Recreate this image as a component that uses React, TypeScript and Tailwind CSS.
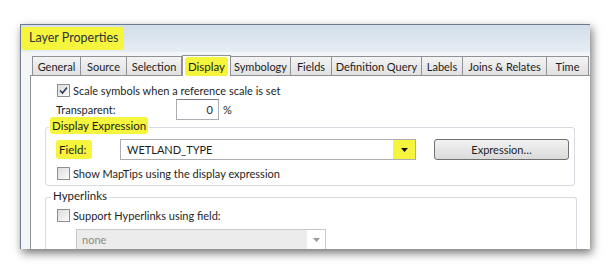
import React from 'react';

const tabs = ['General', 'Source', 'Selection', 'Display', 'Symbology', 'Fields', 'Definition Query', 'Labels', 'Joins & Relates', 'Time'];
const tabWidths: Record<string, string> = {
    General: 'w-[49px]',
    Source: 'w-[46px]',
    Selection: 'w-[55px]',
    Display: 'w-[49px]',
    Symbology: 'w-[60px]',
    Fields: 'w-[41px]',
    'Definition Query': 'w-[90px]',
    Labels: 'w-[41px]',
    'Joins & Relates': 'w-[84px]',
    Time: 'w-[42px]',
};

const Checkbox: React.FC<{ checked?: boolean }> = ({ checked }) => (
    <span className="w-[13px] h-[13px] border border-[#8f8f8f] bg-gradient-to-br from-[#dcdcdc] to-[#fbfbfb] flex items-center justify-center shrink-0">
        {checked && (
            <svg width="9" height="9" viewBox="0 0 9 9">
                <path d="M1 4.5 L3.5 7 L8 1.5" stroke="#2a3a5a" strokeWidth="1.6" fill="none" />
            </svg>
        )}
    </span>
);

const Hi: React.FC<{ children: React.ReactNode; className?: string }> = ({ children, className }) => (
    <span className={`bg-[#f4f53c] rounded-[3px] ${className ?? ''}`}>{children}</span>
);

const App: React.FC = () => {
    return (
        <div className="w-[611px] h-[268px] bg-white overflow-hidden pt-[24px] pl-[20px] text-[11px] text-[#1e1e1e] font-['Lato',sans-serif] leading-none whitespace-nowrap">
            <div className="w-[570px] h-[225px] overflow-hidden border-l border-t border-[#6c7a8c] bg-[#f3f5f8] shadow-[2px_4px_9px_rgba(0,0,0,0.55)] flex flex-col">
                {/* title bar */}
                <div className="shrink-0 h-[27px] bg-gradient-to-b from-[#d3deea] to-[#e6edf4] flex items-center">
                    <Hi className="pl-[8px] pr-[6px] py-[5px] text-[12.5px] text-[#2f343b]">Layer Properties</Hi>
                </div>

                <div className="flex-1 pl-[9px] pt-[2px] flex flex-col">
                    {/* tabs */}
                    <div className="shrink-0 flex items-end h-[21px] pl-[2px]">
                        {tabs.map(t =>
                            t === 'Display' ? (
                                <div key={t} className={`${tabWidths[t]} h-[21px] -mb-[1px] border border-b-0 border-[#8e9297] bg-white flex items-center justify-center relative z-10 px-[2px] pt-[1px]`}>
                                    <Hi className="w-full h-full flex items-center justify-center text-[11.5px]">{t}</Hi>
                                </div>
                            ) : (
                                <div key={t} className={`${tabWidths[t]} h-[19px] border border-b-0 border-l-0 first:border-l border-[#8e9297] bg-gradient-to-b from-[#f4f4f4] to-[#e1e1e1] flex items-center justify-center`}>
                                    {t}
                                </div>
                            )
                        )}
                    </div>

                    {/* panel */}
                    <div className="flex-1 border-l border-t border-[#8e9297] bg-white pl-[26px] pt-[8px]">
                        <div className="flex items-center gap-[2px] h-[13px]">
                            <Checkbox checked />
                            <span className="ml-[1px]">Scale symbols when a reference scale is set</span>
                        </div>

                        <div className="flex items-center h-[21px] mt-[2px] -ml-[1px]">
                            <span className="w-[120px]">Transparent:</span>
                            <span className="w-[43px] h-[21px] border border-[#abadb3] border-t-[#7b7f87] flex items-center justify-end pr-[5px]">0</span>
                            <span className="ml-[4px]">%</span>
                        </div>

                        {/* Display Expression group */}
                        <div className="relative mt-[7px] -ml-[12px] w-[530px] h-[59px] border border-[#d5dbe1] rounded-[3px] pt-[11px] pl-[10px]">
                            <div className="absolute -top-[8px] left-[3px] bg-white px-[1px]">
                                <Hi className="px-[2px] py-[2px] text-[11.5px]">Display Expression</Hi>
                            </div>
                            <div className="flex items-center h-[21px]">
                                <span className="w-[64px]">
                                    <Hi className="pl-[3px] pr-[6px] py-[3px] text-[11.5px]">Field:</Hi>
                                </span>
                                <div className="w-[296px] h-[21px] border border-[#abadb3] flex items-center pl-[6px]">
                                    <span className="flex-1">WETLAND_TYPE</span>
                                    <span className="w-[22px] h-[19px] bg-[#f4f53c] flex items-center justify-center">
                                        <svg width="7" height="4" viewBox="0 0 7 4"><path d="M0 0 H7 L3.5 4 Z" fill="#111" /></svg>
                                    </span>
                                </div>
                                <button className="ml-[18px] w-[135px] h-[21px] rounded-[3px] border border-[#707070] bg-gradient-to-b from-[#f3f3f3] to-[#dadada] text-[11px] text-[#1e1e1e]">
                                    Expression…
                                </button>
                            </div>
                            <div className="flex items-center gap-[3px] mt-[7px] ml-[1px]">
                                <Checkbox />
                                <span>Show MapTips using the display expression</span>
                            </div>
                        </div>

                        {/* Hyperlinks group */}
                        <div className="relative mt-[11px] -ml-[12px] w-[532px] h-[60px] border border-b-0 border-[#d5dbe1] rounded-t-[3px] pt-[11px] pl-[11px]">
                            <div className="absolute -top-[8px] left-[5px] bg-white px-[2px] text-[11.5px]">Hyperlinks</div>
                            <div className="flex items-center gap-[3px]">
                                <Checkbox />
                                <span>Support Hyperlinks using field:</span>
                            </div>
                            <div className="mt-[7px] ml-[19px] w-[250px] h-[21px] border border-[#c8c8c8] flex items-center bg-[#f4f4f4]">
                                <span className="flex-1 pl-[5px] text-[#8a8a8a] bg-[#ececec] h-full flex items-center">none</span>
                                <span className="w-[18px] flex items-center justify-center bg-white h-full">
                                    <svg width="7" height="4" viewBox="0 0 7 4"><path d="M0 0 H7 L3.5 4 Z" fill="#9a9a9a" /></svg>
                                </span>
                            </div>
                        </div>
                    </div>
                </div>
            </div>
        </div>
    );
};

export default App;
